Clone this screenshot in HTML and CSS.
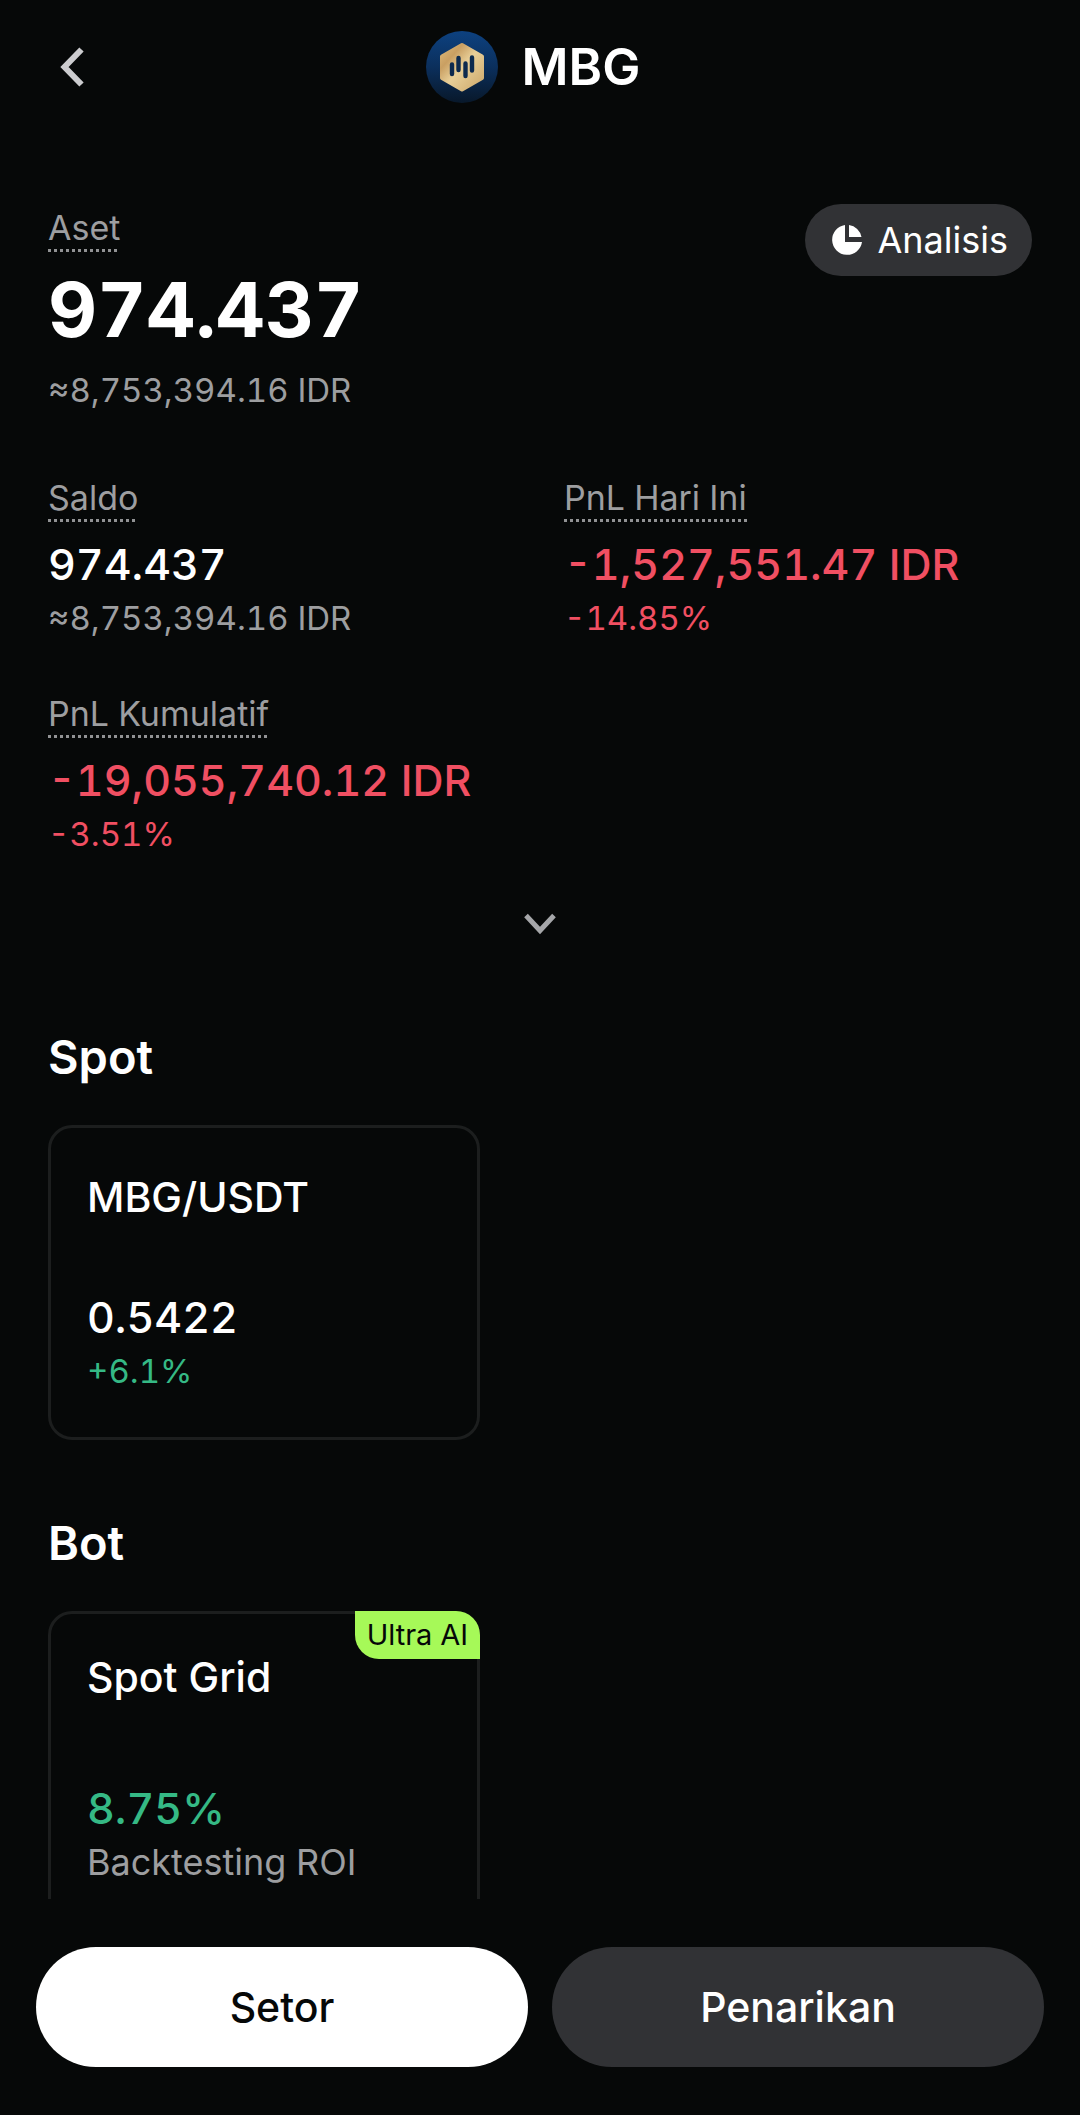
FILE: index.html
```html
<!DOCTYPE html>
<html lang="id">
<head>
<meta charset="utf-8">
<meta name="viewport" content="width=device-width, initial-scale=1">
<title>MBG</title>
<link rel="stylesheet" href="styles.css">
</head>
<body>
<header class="topbar">
  <button class="icon-button back" type="button" aria-label="Kembali">
    <svg width="24" height="40" viewBox="0 0 24 40" fill="none" stroke="#cccccf" stroke-width="6"><path d="M21.500 2.500 4.500 20 21.500 37.500"/></svg>
  </button>
  <h1 class="coin">
    <svg width="72" height="72" viewBox="0 0 72 72" aria-hidden="true">
      <defs>
        <linearGradient id="disc" x1="0" y1="0" x2="0" y2="1"><stop offset="0" stop-color="#0d4180"/><stop offset=".5" stop-color="#0b2f5c"/><stop offset="1" stop-color="#08182a"/></linearGradient>
        <linearGradient id="gold" x1="0" y1="0" x2="1" y2="1"><stop offset="0" stop-color="#dcb878"/><stop offset=".25" stop-color="#c99f62"/><stop offset=".5" stop-color="#e8cf98"/><stop offset="1" stop-color="#cda96c"/></linearGradient>
      </defs>
      <circle cx="36" cy="36" r="36" fill="url(#disc)"/>
      <path d="M36 14 56 25.500V47L36 58.500 16 47V25.500Z" fill="url(#gold)" stroke="url(#gold)" stroke-width="4" stroke-linejoin="round"/>
      <path d="M26 33.500V43M32.500 27V39M39.500 32.500V45M46 26.500V39.500" stroke="#0d2a4e" stroke-width="4.400" stroke-linecap="round"/>
    </svg>
    <span>MBG</span>
  </h1>
</header>

<main class="content">
  <section class="overview">
    <div class="total">
      <span class="label">Aset</span>
      <strong class="total-value">974.437</strong>
      <span class="sub total-sub">≈8,753,394.16 IDR</span>
    </div>
    <button class="analysis" type="button">
      <svg width="30" height="30" viewBox="0 0 30 30" fill="#fff" aria-hidden="true"><path d="M13 0V17H30A15 15 0 1 1 13 0ZM17 0A15 15 0 0 1 29.500 12H17Z"/></svg>
      <span>Analisis</span>
    </button>
  </section>

  <section class="stats">
    <div class="stat">
      <span class="label">Saldo</span>
      <span class="value">974.437</span>
      <span class="sub">≈8,753,394.16 IDR</span>
    </div>
    <div class="stat">
      <span class="label">PnL Hari Ini</span>
      <span class="value down">-1,527,551.47 IDR</span>
      <span class="sub down">-14.85%</span>
    </div>
    <div class="stat">
      <span class="label">PnL Kumulatif</span>
      <span class="value down">-19,055,740.12 IDR</span>
      <span class="sub down">-3.51%</span>
    </div>
  </section>

  <button class="icon-button expand" type="button" aria-label="Selengkapnya">
    <svg width="32" height="22" viewBox="0 0 32 22" fill="none" stroke="#a5a6a9" stroke-width="5"><path d="M2 2.500 16 17.500 30 2.500"/></svg>
  </button>

  <section class="group">
    <h2 class="group-title">Spot</h2>
    <a class="card" href="#spot">
      <span class="card-title">MBG/USDT</span>
      <span class="value">0.5422</span>
      <span class="sub up">+6.1%</span>
    </a>
  </section>

  <section class="group">
    <h2 class="group-title">Bot</h2>
    <a class="card bot" href="#bot">
      <span class="badge">Ultra AI</span>
      <span class="card-title">Spot Grid</span>
      <span class="value up">8.75%</span>
      <span class="sub note">Backtesting ROI</span>
    </a>
  </section>
</main>

<footer class="actions">
  <button class="action primary" type="button">Setor</button>
  <button class="action" type="button">Penarikan</button>
</footer>
</body>
</html>
```

FILE: styles.css
```css
* {
  box-sizing: border-box;
}

body {
  display: flex;
  flex-direction: column;
  height: 100vh;
  margin: 0;
  background: #060808;
  color: #fff;
  font-family: Inter, "Liberation Sans", sans-serif;
  font-size: 34px;
  font-variant-numeric: tabular-nums;
}

button {
  border: 0;
  padding: 0;
  background: none;
  color: inherit;
  font: inherit;
  cursor: pointer;
}

svg {
  display: block;
  flex: none;
}

.topbar {
  display: grid;
  grid-template-columns: 1fr auto 1fr;
  align-items: center;
  flex: none;
  height: 134px;
  padding: 0 62px 0 48px;
}

.icon-button {
  display: flex;
  align-items: center;
  justify-content: center;
}

.back {
  width: 48px;
  height: 48px;
}

.coin {
  display: flex;
  align-items: center;
  gap: 24px;
  margin: 0;
  font-size: 51px;
  font-weight: 600;
  line-height: 72px;
}

.content {
  flex: 1;
  min-height: 0;
  padding: 70px 48px 48px;
  overflow-y: auto;
  scrollbar-width: none;
}

.overview {
  display: flex;
  justify-content: space-between;
  align-items: flex-start;
}

.total,
.stat {
  display: flex;
  flex-direction: column;
  align-items: flex-start;
}

.total {
  padding-top: 3px;
}

/* Square dots, 3px wide on a 6px pitch */
.label {
  padding-bottom: 3px;
  background: repeating-linear-gradient(90deg, #919294 0 3px, transparent 3px 6px) left bottom / 100% 3px no-repeat;
  color: #9d9ea0;
  line-height: 42px;
}

.total-value {
  margin-top: 15px;
  font-size: 76px;
  font-weight: 700;
  line-height: 84px;
}

.sub {
  margin-top: 6px;
  color: #9d9ea0;
  font-size: 33px;
  line-height: 42px;
}

.total-sub {
  margin-top: 18px;
}

.note {
  font-size: 36px;
}

.analysis {
  display: flex;
  align-items: center;
  gap: 16px;
  height: 72px;
  padding: 0 24px 0 27px;
  border-radius: 36px;
  background: #313235;
  font-size: 36px;
  line-height: 42px;
}

.stats {
  display: grid;
  grid-template-columns: 1fr 1fr;
  gap: 54px 48px;
  margin-top: 66px;
}

.value {
  margin-top: 15px;
  font-size: 43px;
  font-weight: 500;
  line-height: 54px;
  white-space: nowrap;
}

.down {
  color: #f04f62;
}

.up {
  color: #35b985;
}

.expand {
  width: 48px;
  height: 42px;
  margin: 48px auto 0;
}

.group {
  margin-top: 73px;
}

.expand + .group {
  margin-top: 82px;
}

.group-title {
  margin: 0 0 38px;
  font-size: 47px;
  font-weight: 600;
  line-height: 60px;
}

.card {
  position: relative;
  display: flex;
  flex-direction: column;
  width: 432px;
  max-width: 100%;
  padding: 45px 36px;
  border: 3px solid #1c1e1e;
  border-radius: 24px;
  color: inherit;
  text-decoration: none;
}

.card-title {
  font-size: 41px;
  font-weight: 500;
  line-height: 48px;
}

.card .value {
  margin-top: 69px;
}

.bot {
  padding-top: 39px;
}

.bot .value {
  margin-top: 80px;
}

.badge {
  position: absolute;
  top: -3px;
  right: -3px;
  padding: 0 12px;
  border-radius: 0 24px 0 24px;
  background: #a6f958;
  color: #060808;
  font-size: 29px;
  line-height: 48px;
}

.actions {
  display: grid;
  grid-template-columns: 1fr 1fr;
  gap: 24px;
  flex: none;
  padding: 48px 36px;
}

.action {
  height: 120px;
  border-radius: 60px;
  background: #313235;
  font-size: 41px;
  font-weight: 500;
}

.primary {
  background: #fff;
  color: #060808;
}
```
